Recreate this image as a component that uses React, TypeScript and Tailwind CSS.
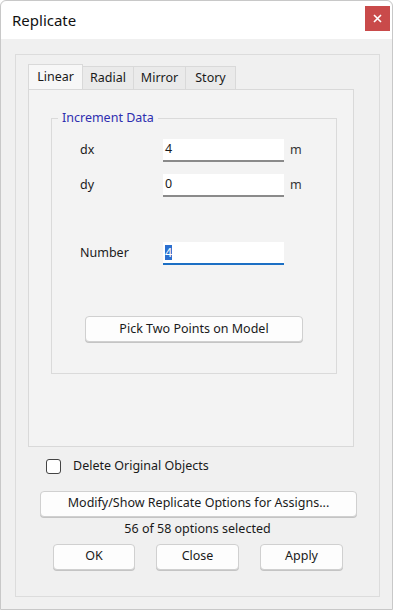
import React from "react";

const font = { fontFamily: '"Noto Sans", "Open Sans", Arial, sans-serif' };

function Field({ label, value, unit, focused }: { label: string; value: string; unit?: string; focused?: boolean }) {
  return (
    <div className="flex items-center h-[23px]">
      <span className="w-[111px] pl-[28px] text-[12.5px] text-[#1a1a1a]">{label}</span>
      <div
        className={`w-[121px] h-[23px] bg-white flex items-center pl-[2px] text-[12.5px] text-[#1a1a1a] border-b-2 ${
          focused ? "border-[#1c6fc4]" : "border-[#8a8a8a] border-b"
        }`}
      >
        {focused ? <span className="bg-[#2b6fcf] text-white leading-[15px]">{value}</span> : value}
      </div>
      {unit && <span className="ml-[6px] text-[12.5px] text-[#333]">{unit}</span>}
    </div>
  );
}

function Btn({ children, className }: { children: React.ReactNode; className: string }) {
  return (
    <button
      className={`h-[26px] bg-[#fdfdfd] border border-[#d0d0d0] rounded-[4px] text-[12.5px] text-[#1a1a1a] flex items-center justify-center shadow-[0_1px_0_#c4c4c4] ${className}`}
    >
      {children}
    </button>
  );
}

export default function App() {
  const tabs = ["Linear", "Radial", "Mirror", "Story"];
  return (
    <div style={font} className="w-[395px] h-[612px] bg-white">
      <div className="w-[393px] h-[610px] bg-[#f0f0f0] border border-[#c8c8c8] rounded-t-[6px] flex flex-col">
        {/* Title bar */}
        <div className="h-[38px] bg-white rounded-t-[6px] flex items-center justify-between pl-[11px] pr-[2px]">
          <span className="text-[15px] text-[#111]">Replicate</span>
          <div className="w-[25px] h-[25px] bg-[#c94a4a] flex items-center justify-center mt-[-4px]">
            <svg width="9" height="9" viewBox="0 0 9 9">
              <path d="M1 1 L8 8 M8 1 L1 8" stroke="white" strokeWidth="1.6" />
            </svg>
          </div>
        </div>

        {/* Frame */}
        <div className="mt-[15px] ml-[14px] w-[365px] h-[543px] border border-[#dcdcdc] flex flex-col">
          {/* Tabs */}
          <div className="mt-[9px] ml-[12px] flex items-end h-[25px]">
            {tabs.map((t, i) => (
              <div
                key={t}
                className={`text-[12.5px] text-[#1a1a1a] border border-b-0 border-[#d9d9d9] flex items-center justify-center ${
                  i === 0 ? "h-[25px] w-[55px] bg-[#f7f7f7]" : "h-[23px] bg-[#eaeaea] border-l-0"
                } ${i === 1 ? "w-[51px]" : ""} ${i === 2 ? "w-[52px]" : ""} ${i === 3 ? "w-[50px]" : ""}`}
              >
                {t}
              </div>
            ))}
          </div>
          <div className="ml-[12px] w-[326px] h-[358px] border border-[#d9d9d9] bg-[#f3f3f3] flex flex-col">
            {/* Group box */}
            <div className="relative mt-[28px] ml-[22px] w-[286px] h-[256px] border border-[#dadada] flex flex-col">
              <span className="absolute -top-[10px] left-[6px] px-[4px] bg-[#f3f3f3] text-[12.5px] text-[#2e2eb0] leading-[18px]">
                Increment Data
              </span>
              <div className="mt-[20px] flex flex-col gap-[12px]">
                <Field label="dx" value="4" unit="m" />
                <Field label="dy" value="0" unit="m" />
              </div>
              <div className="mt-[45px]">
                <Field label="Number" value="4" focused />
              </div>
              <div className="mt-[51px] ml-[33px]">
                <Btn className="w-[218px]">Pick Two Points on Model</Btn>
              </div>
            </div>
          </div>

          {/* Bottom */}
          <div className="mt-[10px] ml-[30px] flex items-center gap-[12px]">
            <div className="w-[15px] h-[15px] border border-[#444] rounded-[3px] bg-white" />
            <span className="text-[12.5px] text-[#1a1a1a]">Delete Original Objects</span>
          </div>
          <div className="mt-[15px] ml-[24px]">
            <Btn className="w-[317px]">Modify/Show Replicate Options for Assigns...</Btn>
          </div>
          <div className="mt-[3px] text-center text-[12.5px] text-[#1a1a1a] w-[365px] -ml-[1px]">
            56 of 58 options selected
          </div>
          <div className="mt-[5px] ml-[37px] flex gap-[21px]">
            <Btn className="w-[82px]">OK</Btn>
            <Btn className="w-[83px]">Close</Btn>
            <Btn className="w-[83px]">Apply</Btn>
          </div>
        </div>
      </div>
    </div>
  );
}
